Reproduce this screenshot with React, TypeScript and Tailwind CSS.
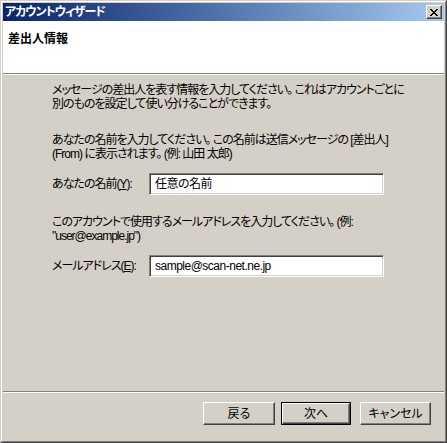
import React from "react";

const font = "font-['Liberation_Sans','Noto_Sans_CJK_JP',sans-serif] [font-feature-settings:'palt']";

function Raised({ children, className = "" }: { children?: React.ReactNode; className?: string }) {
  return (
    <div
      className={
        "flex items-center justify-center border border-t-white border-l-white border-r-[#404040] border-b-[#404040] bg-[#d4d0c8] shadow-[inset_-1px_-1px_0_#808080] " +
        className
      }
    >
      {children}
    </div>
  );
}

function Field({ value }: { value: string }) {
  return (
    <div className="flex h-[22px] w-[235px] items-center border border-t-[#808080] border-l-[#808080] border-b-white border-r-white bg-white pl-[5px] shadow-[inset_1px_1px_0_#404040,inset_-1px_-1px_0_#d4d0c8] text-[12px] leading-[14px] tracking-[-0.5px] text-black">
      {value}
    </div>
  );
}

export default function App() {
  return (
    <div className={"h-[443px] w-[447px] " + font}>
      <div className="h-full w-full border border-t-[#d4d0c8] border-l-[#d4d0c8] border-r-[#404040] border-b-[#404040]">
        <div className="flex h-full w-full flex-col border border-t-white border-l-white border-r-[#808080] border-b-[#808080] bg-[#d4d0c8] p-px">
          {/* title bar */}
          <div className="flex h-[18px] shrink-0 items-center justify-between bg-gradient-to-r from-[#0a246a] to-[#a6caf0] pl-[2px] pr-[2px]">
            <span className="text-[12px] font-bold leading-[14px] tracking-[-1px] text-white">アカウントウィザード</span>
            <Raised className="h-[14px] w-[16px]">
              <svg width="8" height="7" viewBox="0 0 8 7" shapeRendering="crispEdges">
                <path d="M0 0h2v1H0zM6 0h2v1H6zM1 1h2v1H1zM5 1h2v1H5zM2 2h4v1H2zM3 3h2v1H3zM2 4h4v1H2zM1 5h2v1H1zM5 5h2v1H5zM0 6h2v1H0zM6 6h2v1H6z" fill="#000" />
              </svg>
            </Raised>
          </div>

          {/* header */}
          <div className="h-[53px] shrink-0 border-b border-b-[#808080] bg-white pl-[5px] pt-[11px]">
            <div className="text-[12px] font-bold leading-[14px] text-black">差出人情報</div>
          </div>
          <div className="h-px shrink-0 bg-white" />

          {/* body */}
          <div className="flex flex-1 flex-col pl-[49px] pt-[8px] text-[12px] leading-[14px] tracking-[-1px] text-black">
            <p className="whitespace-nowrap">
              メッセージの差出人を表す情報を入力してください。 これはアカウントごとに
              <br />
              別のものを設定して使い分けることができます。
            </p>
            <p className="mt-[22px] whitespace-nowrap">
              あなたの名前を入力してください。 この名前は送信メッセージの [差出人]
              <br />
              (From) に表示されます。 (例: 山田 太郎)
            </p>
            <div className="mt-[12px] flex items-center">
              <span className="w-[97px] whitespace-nowrap">
                あなたの名前(<span className="underline">Y</span>):
              </span>
              <Field value="任意の名前" />
            </div>
            <p className="mt-[20px] whitespace-nowrap">
              このアカウントで使用するメールアドレスを入力してください。 (例:
              <br />
              "user@example.jp")
            </p>
            <div className="mt-[12px] flex items-center">
              <span className="w-[97px] whitespace-nowrap">
                メールアドレス(<span className="underline">E</span>):
              </span>
              <Field value="sample@scan-net.ne.jp" />
            </div>
          </div>

          {/* footer */}
          <div className="h-px shrink-0 bg-[#808080]" />
          <div className="h-px shrink-0 bg-white" />
          <div className="flex h-[47px] shrink-0 items-start justify-end pr-[13px] pt-[9px] text-[12px] leading-[14px] text-black">
            <Raised className="h-[23px] w-[72px]">戻る</Raised>
            <div className="ml-[6px] border border-black">
              <Raised className="h-[21px] w-[68px]">次へ</Raised>
            </div>
            <Raised className="ml-[9px] h-[23px] w-[71px]">キャンセル</Raised>
          </div>
        </div>
      </div>
    </div>
  );
}
